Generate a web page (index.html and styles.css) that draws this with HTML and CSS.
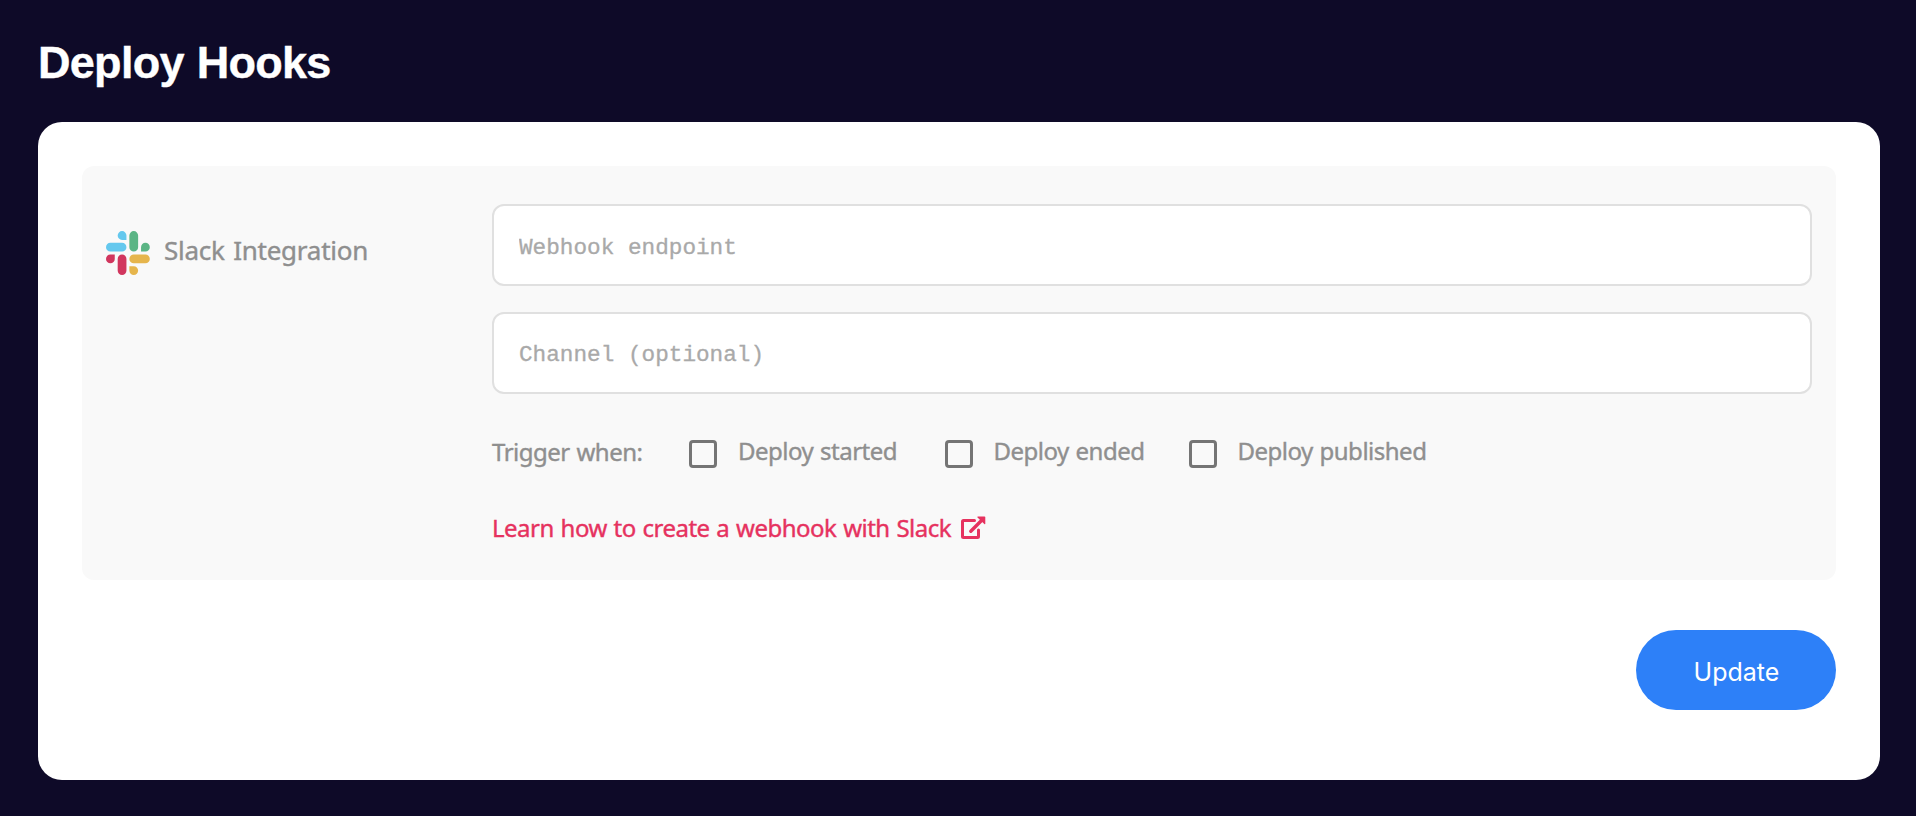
FILE: index.html
```
<!DOCTYPE html>
<html lang="en">
<head>
<meta charset="utf-8">
<title>Deploy Hooks</title>
<link rel="stylesheet" href="styles.css">
</head>
<body>
<main class="page">
  <h1 class="title">Deploy Hooks</h1>
  <form class="card">
    <section class="panel">
      <div class="brand">
        <svg class="brand-icon" viewBox="0 0 54 54" aria-hidden="true">
          <path fill="#64c8ee" d="M19.712.133a5.381 5.381 0 0 0-5.376 5.387 5.381 5.381 0 0 0 5.376 5.386h5.376V5.52A5.381 5.381 0 0 0 19.712.133m0 14.365H5.376A5.381 5.381 0 0 0 0 19.884a5.381 5.381 0 0 0 5.376 5.387h14.336a5.381 5.381 0 0 0 5.376-5.387 5.381 5.381 0 0 0-5.376-5.386"/>
          <path fill="#5bb585" d="M53.76 19.884a5.381 5.381 0 0 0-5.376-5.386 5.381 5.381 0 0 0-5.376 5.386v5.387h5.376a5.381 5.381 0 0 0 5.376-5.387m-14.336 0V5.52A5.381 5.381 0 0 0 34.048.133a5.381 5.381 0 0 0-5.376 5.387v14.364a5.381 5.381 0 0 0 5.376 5.387 5.381 5.381 0 0 0 5.376-5.387"/>
          <path fill="#e6b54c" d="M34.048 54a5.381 5.381 0 0 0 5.376-5.387 5.381 5.381 0 0 0-5.376-5.386h-5.376v5.386A5.381 5.381 0 0 0 34.048 54m0-14.365h14.336a5.381 5.381 0 0 0 5.376-5.386 5.381 5.381 0 0 0-5.376-5.387H34.048a5.381 5.381 0 0 0-5.376 5.387 5.381 5.381 0 0 0 5.376 5.386"/>
          <path fill="#d1365e" d="M0 34.249a5.381 5.381 0 0 0 5.376 5.386 5.381 5.381 0 0 0 5.376-5.386v-5.387H5.376A5.381 5.381 0 0 0 0 34.25m14.336-.001v14.364A5.381 5.381 0 0 0 19.712 54a5.381 5.381 0 0 0 5.376-5.387V34.25a5.381 5.381 0 0 0-5.376-5.387 5.381 5.381 0 0 0-5.376 5.387"/>
        </svg>
        <span class="brand-name">Slack Integration</span>
      </div>
      <div class="fields">
        <input class="input" type="text" placeholder="Webhook endpoint">
        <input class="input input-channel" type="text" placeholder="Channel (optional)">
        <div class="triggers">
          <span class="triggers-label">Trigger when:</span>
          <label class="option option-started"><input class="check" type="checkbox"><span class="option-text">Deploy started</span></label>
          <label class="option option-ended"><input class="check" type="checkbox"><span class="option-text">Deploy ended</span></label>
          <label class="option"><input class="check" type="checkbox"><span class="option-text">Deploy published</span></label>
        </div>
        <a class="learn" href="#"><span class="learn-text">Learn how to create a webhook with Slack</span><svg class="learn-icon" viewBox="0 0 26 24" aria-hidden="true"><path fill="none" stroke="currentColor" stroke-width="3" stroke-linejoin="round" stroke-linecap="round" d="M14.500 4.500H3.500a1 1 0 0 0-1 1V20.500a1 1 0 0 0 1 1H17.500a1 1 0 0 0 1-1V14"/><path fill="none" stroke="currentColor" stroke-width="3.400" stroke-linecap="round" d="M10.800 15.200L21.500 4.500"/><path fill="currentColor" d="M18 .5H24.500a.8.800 0 0 1 .8.800V7.700a.6.600 0 0 1-1 .4L17.500 1.500A.6.600 0 0 1 18 .5z"/></svg></a>
      </div>
    </section>
    <div class="actions">
      <button class="button" type="button">Update</button>
    </div>
  </form>
</main>
</body>
</html>
```
FILE: styles.css
```
* { box-sizing: border-box; }

body {
  margin: 0;
  background: #0e0a28;
  font-family: "Noto Sans", "Open Sans", sans-serif;
  color: #8f8f8f;
}

.page {
  min-height: 816px;
  padding: 37px 36px 36px 38px;
}

.title {
  margin: 0 0 33px;
  font: bold 45px/52px "Liberation Sans", Arial, sans-serif;
  letter-spacing: -0.7px;
  word-spacing: 1px;
  -webkit-text-stroke: 0.4px;
  color: #fff;
}

.card {
  height: 658px;
  padding: 44px;
  border-radius: 24px;
  background: #fff;
}

.panel {
  display: grid;
  grid-template-columns: 386px 1fr;
  height: 414px;
  padding: 38px 24px;
  border-radius: 12px;
  background: #f9f9f9;
}

.brand {
  display: flex;
  align-items: center;
  gap: 14px;
  height: 97px;
}

.brand-icon {
  width: 44px;
  height: 44px;
}

.brand-name {
  margin-top: -5px;
  font-size: 26px;
  line-height: 36px;
  letter-spacing: -0.25px;
  word-spacing: 2px;
  -webkit-text-stroke: 0.4px;
  white-space: nowrap;
}

.fields {
  display: flex;
  flex-direction: column;
}

.input {
  height: 82px;
  padding: 6px 24px 0 25px;
  border: 2px solid #e0e0e0;
  border-radius: 12px;
  background: #fff;
  font: 22.700px "Liberation Mono", monospace;
}

.input-channel {
  margin-top: 26px;
  padding-top: 3px;
}

.input::placeholder {
  color: #a9a9a9;
  opacity: 1;
  -webkit-text-stroke: 0.3px;
}

.triggers {
  display: flex;
  align-items: center;
  height: 36px;
  margin-top: 40px;
  font-size: 24px;
  line-height: 36px;
  letter-spacing: -0.5px;
  word-spacing: 1px;
  -webkit-text-stroke: 0.4px;
  white-space: nowrap;
}

.triggers-label { width: 197px; }

.option {
  display: flex;
  align-items: center;
  gap: 21px;
}

.option-started { width: 255.500px; }

.option-ended { width: 244px; }

.option-text { margin-top: -2px; }

.check {
  width: 28px;
  height: 28px;
  margin: 4px 0 0;
  appearance: none;
  border: 3px solid #757575;
  border-radius: 4px;
}

.learn {
  display: flex;
  align-items: center;
  gap: 4px;
  height: 36px;
  margin-top: 40px;
  font-size: 24px;
  line-height: 36px;
  letter-spacing: -0.5px;
  word-spacing: 1px;
  -webkit-text-stroke: 0.4px;
  color: #e6325f;
  text-decoration: none;
  white-space: nowrap;
}

.learn-text { width: 464px; }

.learn-icon {
  width: 26px;
  height: 24px;
}

.actions {
  display: flex;
  justify-content: flex-end;
  margin-top: 50px;
}

.button {
  width: 200px;
  height: 80px;
  padding: 3px 0 0 1px;
  border: 0;
  border-radius: 40px;
  background: #2d80f8;
  color: #fff;
  font: 25px Inter, sans-serif;
}
```
